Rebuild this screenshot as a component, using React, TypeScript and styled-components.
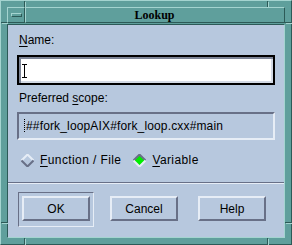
import styled, { createGlobalStyle } from "styled-components";

const teal = "#5f9f9c";
const tealLight = "#a4d4d0";
const tealDark = "#2c5a57";
const face = "#b7c8de";
const faceLight = "#e6edf6";
const faceDark = "#687087";

const GlobalStyle = createGlobalStyle`
  html, body {
    margin: 0;
    padding: 0;
    background: ${teal};
  }
`;

const Window = styled.div`
  position: relative;
  box-sizing: border-box;
  width: 292px;
  height: 245px;
  background: ${teal};
  border: 1px solid;
  border-color: ${tealLight} ${tealDark} ${tealDark} ${tealLight};
  padding: 6px 6px 6px 6px;
  display: flex;
  flex-direction: column;
  font-family: "Liberation Sans", Arial, sans-serif;
`;

const CornerMark = styled.span<{ $v?: boolean }>`
  position: absolute;
  background: ${tealDark};
  box-shadow: 1px 1px 0 ${tealLight};
  ${({ $v }) => ($v ? "width: 1px; height: 6px;" : "width: 6px; height: 1px;")}
`;

const TitleRow = styled.div`
  display: flex;
  height: 16px;
  margin-bottom: 1px;
`;

const Raised = styled.div`
  box-sizing: border-box;
  border: 1px solid;
  border-color: ${tealLight} ${tealDark} ${tealDark} ${tealLight};
  background: ${teal};
`;

const MenuButton = styled(Raised)`
  width: 18px;
  display: flex;
  align-items: center;
  justify-content: center;
`;

const MenuGlyph = styled.span`
  box-sizing: border-box;
  width: 11px;
  height: 4px;
  border: 1px solid;
  border-color: ${tealLight} ${tealDark} ${tealDark} ${tealLight};
`;

const TitleBar = styled(Raised)`
  flex: 1;
  display: flex;
  align-items: center;
  justify-content: center;
  font-family: "Liberation Serif", "Times New Roman", serif;
  font-weight: bold;
  font-size: 12px;
  color: #000;
  padding-right: 1px;
`;

const Client = styled.div`
  flex: 1;
  display: flex;
  flex-direction: column;
  background: ${face};
  border: 1px solid;
  border-color: ${tealDark} ${tealLight} ${tealLight} ${tealDark};
`;

const Form = styled.div`
  display: flex;
  flex-direction: column;
  padding: 8px 0 0 9px;
`;

const Label = styled.div<{ $top?: number }>`
  font-size: 12px;
  line-height: 14px;
  height: 14px;
  padding-left: 2px;
  margin-top: ${({ $top }) => $top ?? 0}px;
  color: #000;
  u {
    text-underline-offset: 2px;
  }
`;

const NameField = styled.div`
  box-sizing: border-box;
  width: 258px;
  height: 30px;
  margin-top: 8px;
  border: 2px solid #000;
  background: #fff;
  box-shadow: inset 2px 2px 0 #7c8496, inset -2px -2px 0 #d3dae5;
  display: flex;
  align-items: center;
  padding-left: 5px;
`;

const Cursor = styled.span`
  position: relative;
  width: 1px;
  height: 14px;
  background: #000;
  margin-top: 2px;
  &::before,
  &::after {
    content: "";
    position: absolute;
    left: -2px;
    width: 5px;
    height: 1px;
    background: #000;
  }
  &::before {
    top: 0;
  }
  &::after {
    bottom: 0;
  }
`;

const ScopeField = styled.div`
  box-sizing: border-box;
  width: 258px;
  height: 28px;
  margin-top: 7px;
  border: 2px solid;
  border-color: ${faceDark} ${faceLight} ${faceLight} ${faceDark};
  display: flex;
  align-items: center;
  padding-left: 5px;
  font-size: 12px;
  letter-spacing: 0.15px;
  color: #000;
`;

const Caret = styled.span`
  width: 1px;
  height: 14px;
  margin-right: 1px;
  background: repeating-linear-gradient(#000 0 1px, transparent 1px 2px);
`;

const RadioRow = styled.div`
  display: flex;
  align-items: center;
  height: 14px;
  margin-top: 13px;
  padding-left: 4px;
`;

const RadioItem = styled.label`
  display: flex;
  align-items: center;
  font-size: 12px;
  letter-spacing: 0.4px;
  color: #000;
  margin-right: 12px;
  svg {
    margin-right: 6px;
  }
  u {
    text-underline-offset: 2px;
  }
`;

const Separator = styled.div`
  height: 1px;
  margin-top: 15px;
  background: ${faceDark};
  border-bottom: 1px solid ${faceLight};
`;

const ButtonRow = styled.div`
  display: flex;
  padding: 8px 0 0 10px;
  gap: 12px;
`;

const DefaultRing = styled.div<{ $default?: boolean }>`
  box-sizing: border-box;
  width: 76px;
  height: 35px;
  padding: 3px 3px 4px 3px;
  border: 1px solid;
  border-color: ${({ $default }) =>
    $default ? `${faceDark} ${faceLight} ${faceLight} ${faceDark}` : "transparent"};
`;

const Button = styled.button`
  box-sizing: border-box;
  width: 68px;
  height: 25px;
  padding: 0;
  background: ${face};
  border: 2px solid;
  border-color: ${faceLight} ${faceDark} ${faceDark} ${faceLight};
  font-family: "Liberation Sans", Arial, sans-serif;
  font-size: 12px;
  color: #000;
`;

const Diamond = ({ on }: { on?: boolean }) => (
  <svg width="13" height="13" viewBox="0 0 13 13">
    <polygon points="6.5,0.5 12.5,6.5 6.5,12.5 0.5,6.5" fill={on ? "#00ee00" : face} />
    <polyline
      points="0.5,6.5 6.5,0.5 12.5,6.5"
      fill="none"
      stroke={on ? faceDark : faceLight}
      strokeWidth="2"
    />
    <polyline
      points="0.5,6.5 6.5,12.5 12.5,6.5"
      fill="none"
      stroke={on ? faceLight : faceDark}
      strokeWidth="2"
    />
  </svg>
);

export default function App() {
  return (
    <>
      <GlobalStyle />
      <Window>
        <CornerMark $v style={{ left: 23, top: 0 }} />
        <CornerMark style={{ left: 0, top: 21 }} />
        <CornerMark $v style={{ right: 23, top: 0 }} />
        <CornerMark style={{ right: 0, top: 21 }} />
        <CornerMark $v style={{ left: 23, bottom: 0 }} />
        <CornerMark style={{ left: 0, bottom: 21 }} />
        <CornerMark $v style={{ right: 23, bottom: 0 }} />
        <CornerMark style={{ right: 0, bottom: 21 }} />
        <TitleRow>
          <MenuButton>
            <MenuGlyph />
          </MenuButton>
          <TitleBar>Lookup</TitleBar>
        </TitleRow>
        <Client>
          <Form>
            <Label>
              <u>N</u>ame:
            </Label>
            <NameField>
              <Cursor />
            </NameField>
            <Label $top={6}>
              Preferred <u>s</u>cope:
            </Label>
            <ScopeField>
              <Caret />
              ##fork_loopAIX#fork_loop.cxx#main
            </ScopeField>
            <RadioRow>
              <RadioItem>
                <Diamond />
                <span>
                  <u>F</u>unction / File
                </span>
              </RadioItem>
              <RadioItem>
                <Diamond on />
                <span>
                  <u>V</u>ariable
                </span>
              </RadioItem>
            </RadioRow>
          </Form>
          <Separator />
          <ButtonRow>
            <DefaultRing $default>
              <Button>OK</Button>
            </DefaultRing>
            <DefaultRing>
              <Button>Cancel</Button>
            </DefaultRing>
            <DefaultRing>
              <Button>Help</Button>
            </DefaultRing>
          </ButtonRow>
        </Client>
      </Window>
    </>
  );
}
